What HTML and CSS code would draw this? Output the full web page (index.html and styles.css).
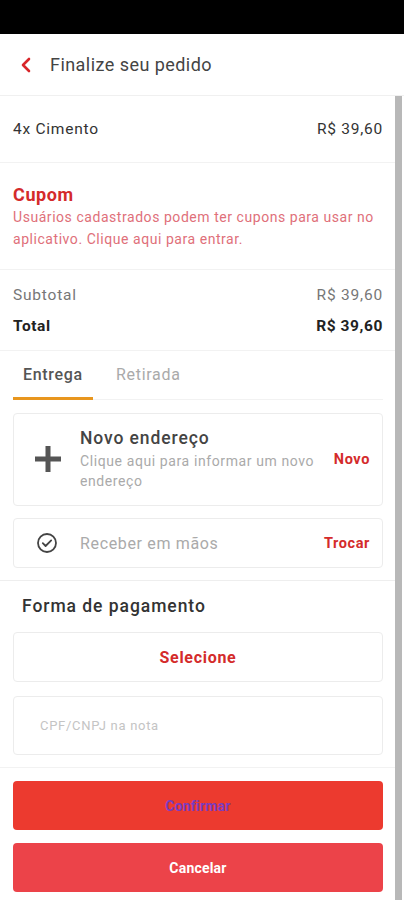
FILE: index.html
```html
<!DOCTYPE html>
<html lang="pt-BR">
<head>
<meta charset="utf-8">
<title>Finalize seu pedido</title>
<link rel="stylesheet" href="styles.css">
</head>
<body>
<div class="status"></div>
<header class="header">
  <svg class="back" width="12" height="16" viewBox="0 0 12 16"><path d="M9 2 L3 8 L9 14" fill="none" stroke="#d8262a" stroke-width="2.6" stroke-linecap="round" stroke-linejoin="round"/></svg>
  <span class="title">Finalize seu pedido</span>
</header>
<div class="body">
  <main class="content">
    <section class="row item">
      <span>4x Cimento</span>
      <span>R$ 39,60</span>
    </section>
    <section class="cupom">
      <div class="cupom-title">Cupom</div>
      <div class="cupom-text">Usuários cadastrados podem ter cupons para usar no aplicativo. Clique aqui para entrar.</div>
    </section>
    <section class="totals">
      <div class="row sub"><span>Subtotal</span><span>R$ 39,60</span></div>
      <div class="row total"><span>Total</span><span>R$ 39,60</span></div>
    </section>
    <nav class="tabs">
      <div class="tab active">Entrega</div>
      <div class="tab">Retirada</div>
    </nav>
    <div class="cards">
      <div class="card addr">
        <svg class="plus" width="30" height="30" viewBox="0 0 30 30"><path d="M15 2 V28 M2 15 H28" stroke="#555" stroke-width="5" stroke-linecap="butt"/></svg>
        <div class="addr-text">
          <div class="addr-title">Novo endereço</div>
          <div class="addr-sub">Clique aqui para informar um novo endereço</div>
        </div>
        <span class="link">Novo</span>
      </div>
      <div class="card hand">
        <svg class="check" width="22" height="22" viewBox="0 0 22 22"><circle cx="11" cy="11" r="9" fill="none" stroke="#444" stroke-width="1.8"/><path d="M6.8 11.2 L9.6 14 L15.2 8.4" fill="none" stroke="#444" stroke-width="1.8" stroke-linecap="round" stroke-linejoin="round"/></svg>
        <span class="hand-text">Receber em mãos</span>
        <span class="link">Trocar</span>
      </div>
    </div>
    <section class="pay">
      <div class="pay-title">Forma de pagamento</div>
      <div class="card select">Selecione</div>
      <div class="card cpf">CPF/CNPJ na nota</div>
    </section>
    <section class="actions">
      <button class="btn confirm">Confirmar</button>
      <button class="btn cancel">Cancelar</button>
    </section>
  </main>
  <div class="scrollbar"></div>
</div>
</body>
</html>
```
FILE: styles.css
```css
* { box-sizing: border-box; }
html, body { margin: 0; padding: 0; background: #fff; }
body { font-family: Roboto, "Noto Sans", sans-serif; color: #333; width: 404px; height: 900px; overflow: hidden; }

.status { height: 34px; background: #000; }

.header {
  height: 62px;
  display: flex;
  align-items: center;
  padding-left: 20px;
  border-bottom: 1px solid #f0f0f0;
}
.back { margin-right: 18px; margin-top: 1px; }
.title { font-size: 18px; color: #444; letter-spacing: 0.45px; }

.body { display: flex; padding-right: 2px; }
.content { width: 395px; }
.scrollbar { width: 7px; height: 804px; background: #b8b8b8; }

.row { display: flex; justify-content: space-between; align-items: center; }

.item {
  height: 67px;
  padding: 0 12px 0 13px;
  font-size: 15.5px;
  letter-spacing: 0.75px;
  color: #333;
  border-bottom: 1px solid #f2f2f2;
}

.cupom {
  height: 107px;
  padding: 22px 12px 0 13px;
  border-bottom: 1px solid #f2f2f2;
}
.cupom-title { font-size: 18px; letter-spacing: 0.6px; font-weight: 700; color: #d42b2b; line-height: 20px; }
.cupom-text { font-size: 14px; color: #e0707a; line-height: 22px; margin-top: 1px; letter-spacing: 0.55px; }

.totals {
  height: 81px;
  padding: 15px 12px 0 13px;
  border-bottom: 1px solid #f2f2f2;
}
.sub { height: 20px; font-size: 15.5px; letter-spacing: 0.8px; color: #777; }
.total { height: 20px; margin-top: 11px; font-size: 15.5px; letter-spacing: 0.6px; font-weight: 700; color: #222; }

.tabs {
  display: flex;
  height: 49px;
  margin: 0 12px 0 13px;
  border-bottom: 1px solid #f2f2f2;
}
.tab {
  padding: 14px 0 0 23px;
  font-size: 16px;
  color: #aaa;
  height: 49px;
  letter-spacing: 0.7px;
}
.tab.active { color: #555; width: 80px; border-bottom: 3px solid #e8961e; padding-left: 10px; font-weight: 500; }

.cards { padding: 13px 12px 12px 13px; display: flex; flex-direction: column; gap: 12px; border-bottom: 1px solid #eee; }
.card {
  border: 1px solid #ececec;
  border-radius: 4px;
  background: #fff;
}
.addr { height: 93px; display: flex; align-items: center; padding: 0 12px 0 19px; }
.plus { flex: none; margin-right: 17px; margin-top: -2px; }
.addr-text { flex: 1; }
.addr-title { font-size: 17.5px; color: #444; line-height: 20px; margin-bottom: 3px; letter-spacing: 0.9px; font-weight: 500; }
.addr-sub { font-size: 14px; color: #aaa; line-height: 20px; width: 245px; letter-spacing: 0.6px; }
.link { color: #d42b2b; font-weight: 700; font-size: 14.5px; letter-spacing: 0.6px; }
.hand { height: 50px; display: flex; align-items: center; padding: 0 12px 0 22px; }
.check { flex: none; margin-right: 22px; }
.hand-text { flex: 1; font-size: 16px; color: #aaa; letter-spacing: 0.65px; }

.pay { padding: 15px 12px 12px 13px; border-bottom: 1px solid #f2f2f2; }
.pay-title { font-size: 17.5px; color: #333; font-weight: 500; padding-left: 9px; line-height: 20px; margin-bottom: 16px; letter-spacing: 0.95px; }
.select { height: 50px; display: flex; align-items: center; justify-content: center; color: #d42b2b; font-weight: 700; font-size: 16px; letter-spacing: 0.7px; }
.cpf { height: 59px; margin-top: 14px; display: flex; align-items: center; padding-left: 26px; font-size: 13px; letter-spacing: 0.7px; color: #c4c4c4; }

.actions { padding: 13px 12px 0 13px; display: flex; flex-direction: column; gap: 13px; }
.btn {
  height: 49px;
  border: none;
  border-radius: 4px;
  font-family: Roboto, "Noto Sans", sans-serif;
  font-weight: 700;
  font-size: 14px;
  letter-spacing: 0.2px;
  width: 100%;
}
.confirm { background: #ec3a2f; color: #7a3cc0; }
.cancel { background: #ec4349; color: #fff; }
```
